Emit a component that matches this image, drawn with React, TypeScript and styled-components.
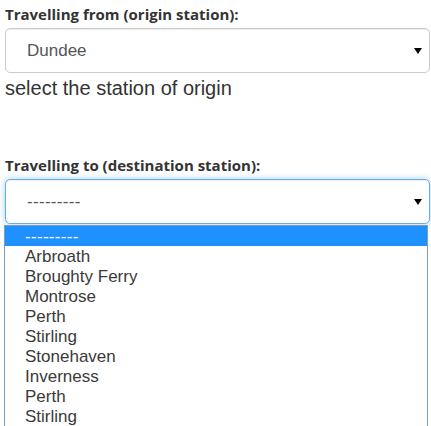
import styled, { createGlobalStyle } from "styled-components"

const GlobalStyle = createGlobalStyle`
  html, body {
    margin: 0;
    padding: 0;
    background: #fff;
  }
  body {
    min-height: 100vh;
    font-family: "Liberation Sans", Arial, sans-serif;
    color: #333;
  }
`

const Form = styled.form`
  min-height: 426px;
  padding: 4px 1px 0 5px;
`

const Field = styled.div<{ $gap?: number }>`
  position: relative;
  margin-bottom: ${(p) => p.$gap ?? 0}px;
`

const Label = styled.label`
  display: block;
  font-family: "Open Sans", sans-serif;
  font-weight: 700;
  font-size: 15px;
  line-height: 20px;
  color: #333;
  margin-bottom: 4px;
`

const SelectBox = styled.div<{ $focused?: boolean }>`
  box-sizing: border-box;
  height: 45px;
  display: flex;
  align-items: center;
  justify-content: space-between;
  padding: 0 7px 0 21px;
  border: 1px solid ${(p) => (p.$focused ? "#66afe9" : "#ccc")};
  border-radius: 5px;
  background: #fff;
  font-size: 17px;
  color: #555;
  box-shadow: ${(p) =>
    p.$focused
      ? "inset 0 1px 1px rgba(0,0,0,.075), 0 0 6px rgba(102,175,233,.6)"
      : "inset 0 1px 1px rgba(0,0,0,.075)"};
`

const Dashes = styled.span`
  letter-spacing: 0.3px;
`

const Arrow = styled.span`
  width: 0;
  height: 0;
  border-left: 4px solid transparent;
  border-right: 4px solid transparent;
  border-top: 6px solid #000;
  margin-top: 1px;
`

const HelpText = styled.p`
  margin: 4px 0 0;
  font-size: 20px;
  line-height: 23px;
  color: #333;
`

const OptionList = styled.ul`
  position: absolute;
  top: 70px;
  left: -1px;
  width: 424px;
  margin: 0;
  padding: 0;
  list-style: none;
  background: #fff;
  border: 1px solid #7f9db9;
  border-bottom: none;
  box-sizing: border-box;
  height: 202px;
  overflow: hidden;
`

const Option = styled.li<{ $active?: boolean }>`
  height: 20px;
  line-height: 22px;
  padding-left: 20px;
  font-size: 17px;
  color: ${(p) => (p.$active ? "#fff" : "#3a3a3a")};
  background: ${(p) => (p.$active ? "#1e90ff" : "transparent")};
  white-space: nowrap;
  overflow: hidden;
`

const stations = [
  "---------",
  "Arbroath",
  "Broughty Ferry",
  "Montrose",
  "Perth",
  "Stirling",
  "Stonehaven",
  "Inverness",
  "Perth",
  "Stirling",
]

export default function App() {
  return (
    <>
      <GlobalStyle />
      <Form>
        <Field $gap={55}>
          <Label>Travelling from (origin station):</Label>
          <SelectBox>
            <span>Dundee</span>
            <Arrow />
          </SelectBox>
          <HelpText>select the station of origin</HelpText>
        </Field>

        <Field>
          <Label>Travelling to (destination station):</Label>
          <SelectBox $focused>
            <Dashes>---------</Dashes>
            <Arrow />
          </SelectBox>
          <OptionList>
            {stations.map((name, index) => (
              <Option key={index} $active={index === 0}>
                {index === 0 ? <Dashes>{name}</Dashes> : name}
              </Option>
            ))}
          </OptionList>
        </Field>
      </Form>
    </>
  )
}
